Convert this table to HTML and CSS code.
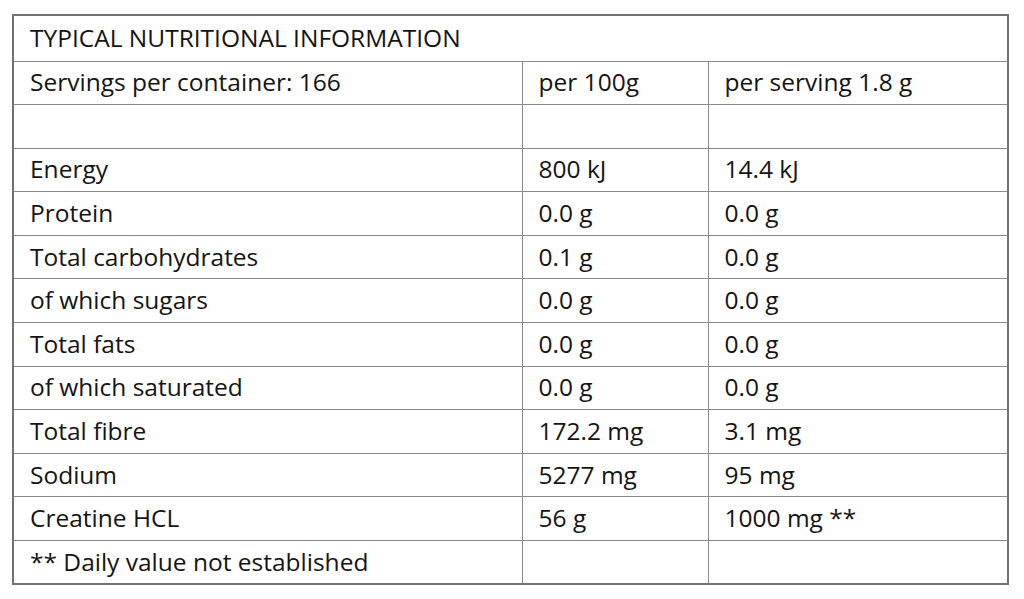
FILE: index.html
```html
<!DOCTYPE html>
<html>
<head>
<meta charset="utf-8">
<link rel="stylesheet" href="styles.css">
</head>
<body>
<div class="wrap">
<table class="nutri">
  <colgroup>
    <col class="c1"><col class="c2"><col class="c3">
  </colgroup>
  <tr class="title"><td colspan="3">TYPICAL NUTRITIONAL INFORMATION</td></tr>
  <tr><td>Servings per container: 166</td><td>per 100g</td><td>per serving 1.8 g</td></tr>
  <tr><td></td><td></td><td></td></tr>
  <tr><td>Energy</td><td>800 kJ</td><td>14.4 kJ</td></tr>
  <tr><td>Protein</td><td>0.0 g</td><td>0.0 g</td></tr>
  <tr><td>Total carbohydrates</td><td>0.1 g</td><td>0.0 g</td></tr>
  <tr><td>of which sugars</td><td>0.0 g</td><td>0.0 g</td></tr>
  <tr><td>Total fats</td><td>0.0 g</td><td>0.0 g</td></tr>
  <tr><td>of which saturated</td><td>0.0 g</td><td>0.0 g</td></tr>
  <tr><td>Total fibre</td><td>172.2 mg</td><td>3.1 mg</td></tr>
  <tr><td>Sodium</td><td>5277 mg</td><td>95 mg</td></tr>
  <tr><td>Creatine HCL</td><td>56 g</td><td>1000 mg **</td></tr>
  <tr><td>** Daily value not established</td><td></td><td></td></tr>
</table>
</div>
</body>
</html>
```
FILE: styles.css
```css
html, body {
  margin: 0;
  padding: 0;
  background: #ffffff;
}
.wrap {
  padding: 14px 0 0 12px;
}
.nutri {
  border-collapse: collapse;
  width: 995px;
  table-layout: fixed;
  border: 2px solid #727272;
  font-family: "Open Sans", "Noto Sans", sans-serif;
  font-size: 24.5px;
  color: #141414;
}
.c1 { width: 509px; }
.c2 { width: 186px; }
.c3 { width: 300px; }
.nutri td {
  border: 1px solid #8a8a8a;
  padding: 0 0 1px 16px;
  height: 43.6px;
  line-height: 30px;
  vertical-align: middle;
  white-space: nowrap;
  box-sizing: border-box;
  overflow: hidden;
}
.nutri tr.title td {
  height: 46px;
}
```
